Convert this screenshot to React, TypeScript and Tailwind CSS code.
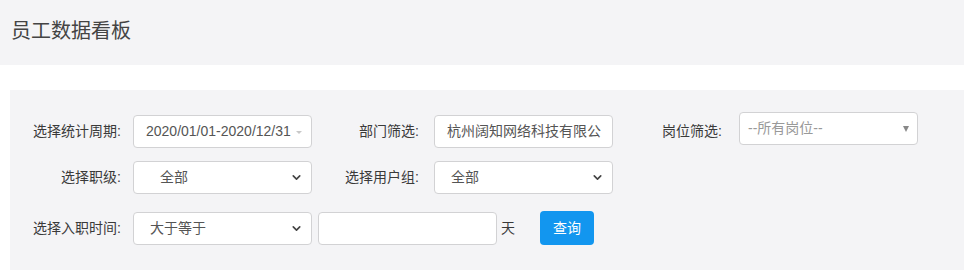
import { ChevronDown } from 'lucide-react';

const FONT = "font-['Liberation_Sans','Noto_Sans_CJK_SC',sans-serif]";

function Label({ text, width }: { text: string; width: string }) {
  return <div className={`${width} shrink-0 text-right text-[14px] text-[#3a3a3a]`}>{text}</div>;
}

function Box({ children, className = '' }: { children: React.ReactNode; className?: string }) {
  return (
    <div
      className={`relative flex h-[33px] w-[179px] shrink-0 items-center rounded-[4px] border border-[#d2d2d4] bg-white text-[14px] ${className}`}
    >
      {children}
    </div>
  );
}

function NativeSelect({ value, pad, className = '' }: { value: string; pad: string; className?: string }) {
  return (
    <Box className={className}>
      <span className={`${pad} text-[#555]`}>{value}</span>
      <ChevronDown className="absolute right-[8px] h-[13px] w-[13px] text-[#444]" strokeWidth={3} />
    </Box>
  );
}

export default function App() {
  return (
    <div className={`${FONT} h-[270px] w-[964px] overflow-hidden bg-white`}>
      {/* Header */}
      <div className="flex h-[65px] items-center bg-[#f4f4f6] pb-[3px] pl-[11px]">
        <h1 className="text-[20px] text-[#444]">员工数据看板</h1>
      </div>

      {/* Filter panel */}
      <div className="pl-[10px] pt-[25px]">
        <div className="h-[180px] bg-[#f4f4f6] pt-[25px]">
          {/* Row 1 */}
          <div className="flex items-center">
            <Label text="选择统计周期:" width="w-[111px]" />
            <Box className="ml-[12px]">
              <span className="pl-[12px] text-[#555]">2020/01/01-2020/12/31</span>
              <span className="absolute right-[9px] top-[15px] h-0 w-0 border-x-[3px] border-t-[3px] border-x-transparent border-t-[#c8c8c8]" />
            </Box>
            <Label text="部门筛选:" width="w-[107px]" />
            <Box className="ml-[15px]">
              <span className="pl-[12px] text-[#555]">杭州阔知网络科技有限公</span>
            </Box>
            <Label text="岗位筛选:" width="w-[109px]" />
            <Box className="ml-[17px] -mt-[6px]">
              <span className="pl-[8px] text-[#999]">--所有岗位--</span>
              <span className="absolute right-[8px] top-[13px] h-0 w-0 border-x-[3px] border-t-[6px] border-x-transparent border-t-[#888]" />
            </Box>
          </div>

          {/* Row 2 */}
          <div className="mt-[13px] flex items-center">
            <Label text="选择职级:" width="w-[111px]" />
            <NativeSelect value="全部" pad="pl-[26px]" className="ml-[12px]" />
            <Label text="选择用户组:" width="w-[107px]" />
            <NativeSelect value="全部" pad="pl-[16px]" className="ml-[15px]" />
          </div>

          {/* Row 3 */}
          <div className="mt-[17px] flex items-center">
            <Label text="选择入职时间:" width="w-[111px]" />
            <NativeSelect value="大于等于" pad="pl-[16px]" className="ml-[12px]" />
            <Box className="ml-[6px]">
              <span />
            </Box>
            <span className="ml-[4px] text-[14px] text-[#3a3a3a]">天</span>
            <button className="ml-[25px] h-[34px] w-[54px] rounded-[4px] bg-[#1296ef] text-[14px] text-white">
              查询
            </button>
          </div>
        </div>
      </div>
    </div>
  );
}
